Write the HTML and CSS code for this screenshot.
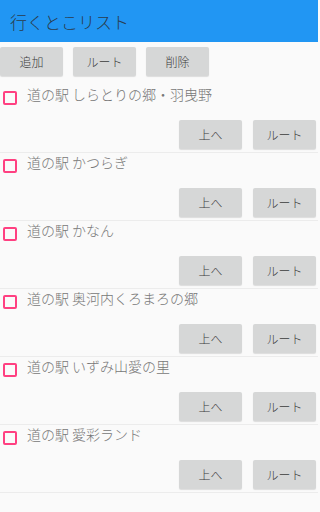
FILE: index.html
```html
<!DOCTYPE html>
<html lang="ja">
<head>
<meta charset="utf-8">
<link rel="stylesheet" href="styles.css">
</head>
<body>
<header class="appbar"><span class="title">行くとこリスト</span></header>
<div class="toolbar">
  <button class="btn">追加</button>
  <button class="btn">ルート</button>
  <button class="btn">削除</button>
</div>
<ul class="list">
  <li class="row">
    <div class="row-head"><span class="check"></span><span class="name">道の駅 しらとりの郷・羽曳野</span></div>
    <div class="row-actions"><button class="btn">上へ</button><button class="btn">ルート</button></div>
  </li>
  <li class="row">
    <div class="row-head"><span class="check"></span><span class="name">道の駅 かつらぎ</span></div>
    <div class="row-actions"><button class="btn">上へ</button><button class="btn">ルート</button></div>
  </li>
  <li class="row">
    <div class="row-head"><span class="check"></span><span class="name">道の駅 かなん</span></div>
    <div class="row-actions"><button class="btn">上へ</button><button class="btn">ルート</button></div>
  </li>
  <li class="row">
    <div class="row-head"><span class="check"></span><span class="name">道の駅 奥河内くろまろの郷</span></div>
    <div class="row-actions"><button class="btn">上へ</button><button class="btn">ルート</button></div>
  </li>
  <li class="row">
    <div class="row-head"><span class="check"></span><span class="name">道の駅 いずみ山愛の里</span></div>
    <div class="row-actions"><button class="btn">上へ</button><button class="btn">ルート</button></div>
  </li>
  <li class="row">
    <div class="row-head"><span class="check"></span><span class="name">道の駅 愛彩ランド</span></div>
    <div class="row-actions"><button class="btn">上へ</button><button class="btn">ルート</button></div>
  </li>
</ul>
</body>
</html>
```
FILE: styles.css
```css
html, body {
  margin: 0;
  padding: 0;
}
body {
  background: #fafafa;
  font-family: "Noto Sans CJK JP", "Noto Sans", sans-serif;
  font-weight: 300;
  width: 318px;
  height: 512px;
  overflow: hidden;
}
.appbar {
  height: 42px;
  background: #2196f3;
  display: flex;
  align-items: center;
  padding-left: 10px;
  box-sizing: border-box;
}
.title {
  font-size: 17px;
  font-weight: 300;
  color: #2a3b4c;
  line-height: 1;
}
.toolbar {
  display: flex;
  gap: 10px;
  padding-top: 5px;
  margin-bottom: 9px;
}
.btn {
  width: 63px;
  height: 29px;
  margin: 0;
  padding: 0;
  border: none;
  border-radius: 2px;
  background: #d6d7d7;
  box-shadow: 0 1px 1px rgba(0, 0, 0, 0.12);
  font-family: "Noto Sans CJK JP", "Noto Sans", sans-serif;
  font-weight: 300;
  font-size: 12px;
  color: #3c3c3c;
  line-height: 1;
}
.list {
  list-style: none;
  margin: 0;
  padding: 0;
}
.row {
  height: 68px;
  box-sizing: border-box;
  border-bottom: 1px solid #ececec;
  display: flex;
  flex-direction: column;
}
.row-head {
  display: flex;
  align-items: center;
  height: 22px;
  margin-top: -2px;
  padding-left: 3px;
}
.check {
  width: 14px;
  height: 14px;
  box-sizing: border-box;
  border: 2px solid #ff4081;
  border-radius: 2px;
  margin-top: 7px;
}
.name {
  font-size: 14px;
  font-weight: 300;
  color: #777;
  margin-left: 10px;
  line-height: 1;
}
.row-actions {
  display: flex;
  justify-content: flex-end;
  gap: 11px;
  padding-right: 2px;
  margin-top: 15px;
}
```
